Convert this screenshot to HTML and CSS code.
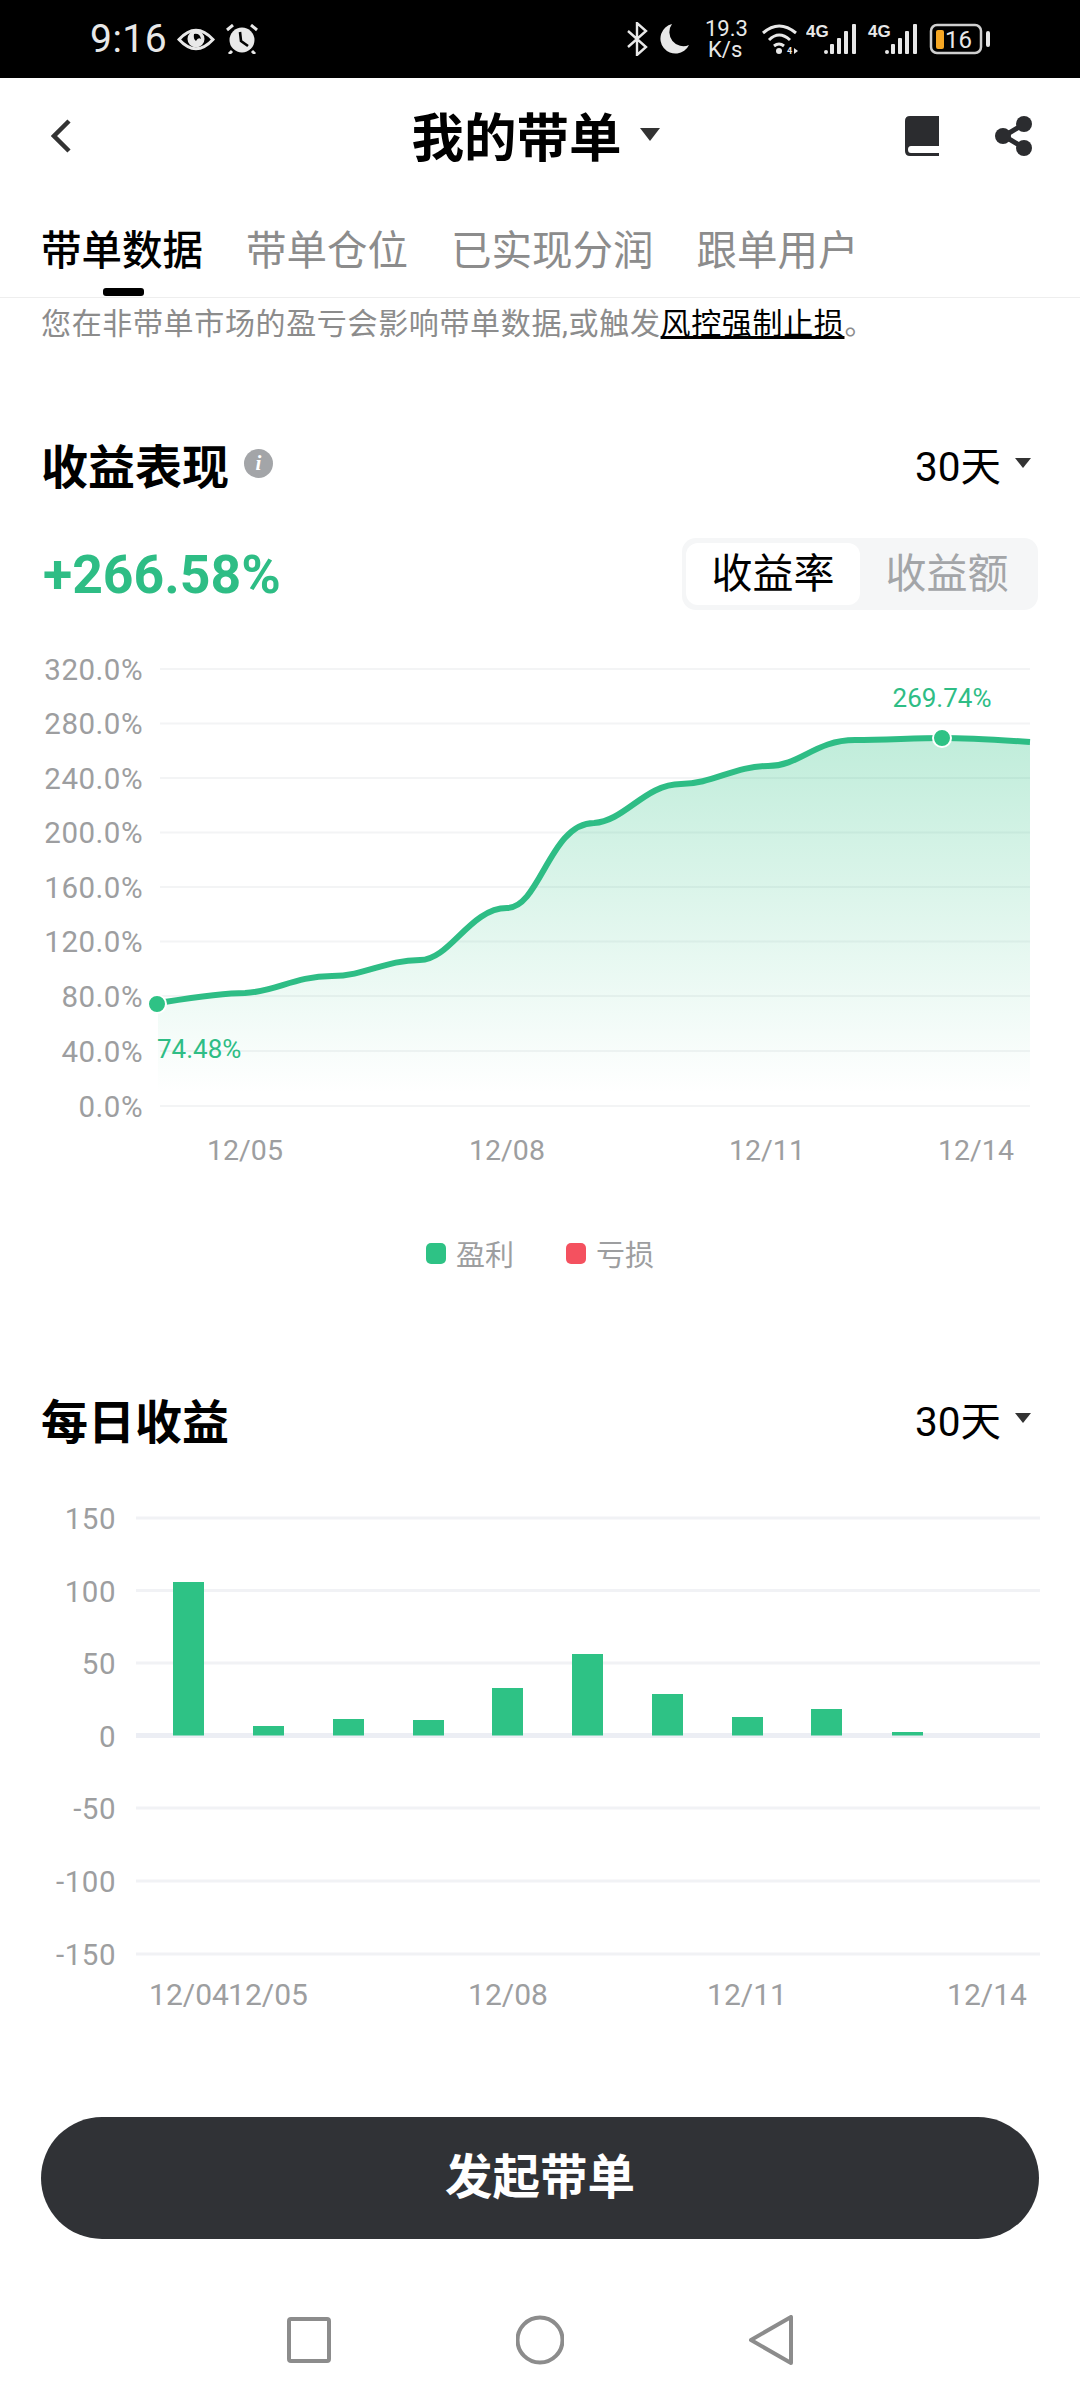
FILE: index.html
```html
<!DOCTYPE html>
<html lang="zh-CN">
<head>
	<meta charset="UTF-8">
	<title>我的带单</title>
	<link rel="stylesheet" href="styles.css">
</head>
<body>
	<div class="statusbar">
		<div class="status-left">
			<span class="clock">9:16</span>
			<svg class="ic-eye" width="38" height="25" viewBox="0 0 38 25">
				<path d="M2 12.5Q19 -6 36 12.5Q19 31 2 12.5Z" fill="none" stroke="#e8e8e8" stroke-width="3"/>
				<circle cx="19" cy="12" r="8.5" fill="#e8e8e8"/>
				<path d="M17 7Q23 6 24 12Q21 10 19 14Q16 12 17 7Z" fill="#000"/>
			</svg>
			<svg class="ic-alarm" width="32" height="30" viewBox="0 0 32 30">
				<circle cx="16" cy="16" r="12.5" fill="#e8e8e8"/>
				<path d="M1 6L7 1M31 6L25 1M6 27L3 30M26 27L29 30" stroke="#e8e8e8" stroke-width="3" fill="none"/>
				<path d="M14 8L15 17L22 22" stroke="#000" stroke-width="2.6" fill="none"/>
			</svg>
		</div>
		<div class="status-right">
			<svg width="25" height="34" viewBox="0 0 25 34">
				<path d="M1 9L19 25L10 33V1L19 9L1 25" fill="none" stroke="#e8e8e8" stroke-width="2.4"/>
			</svg>
			<svg width="37" height="34" viewBox="0 0 37 34">
				<path d="M12 2A15 15 0 1 0 29 23A14 14 0 0 1 12 2Z" fill="#e8e8e8"/>
			</svg>
			<div class="netspeed"><span>19.3</span><span>K/s</span></div>
			<svg width="36" height="34" viewBox="0 0 36 34">
				<path d="M1 11Q17 -3 34 11M7 18Q17 8 28 18M12 24Q17 20 22 24" fill="none" stroke="#e8e8e8" stroke-width="3"/>
				<circle cx="17" cy="29" r="3" fill="#e8e8e8"/>
				<text x="25" y="32" class="t-wifi">4</text>
				<path d="M32 26L36 29L32 32Z" fill="#e8e8e8"/>
			</svg>
			<svg width="51" height="34" viewBox="0 0 51 34">
				<text x="0" y="15" class="t-4g">4G</text>
				<g fill="#e8e8e8">
					<rect x="18" y="28" width="4" height="4" rx="2"/>
					<rect x="24" y="22" width="4" height="10" rx="1"/>
					<rect x="31" y="16" width="4" height="16" rx="1"/>
					<rect x="38" y="9" width="4" height="23" rx="1"/>
					<rect x="46" y="2" width="4" height="30" rx="1"/>
				</g>
			</svg>
			<svg width="53" height="34" viewBox="0 0 53 34">
				<text x="3" y="15" class="t-4g">4G</text>
				<g fill="#e8e8e8">
					<rect x="20" y="28" width="4" height="4" rx="2"/>
					<rect x="26" y="22" width="4" height="10" rx="1"/>
					<rect x="33" y="16" width="4" height="16" rx="1"/>
					<rect x="40" y="9" width="4" height="23" rx="1"/>
					<rect x="48" y="2" width="4" height="30" rx="1"/>
				</g>
			</svg>
			<svg width="64" height="34" viewBox="0 0 64 34">
				<rect x="5" y="3" width="50" height="28" rx="6" fill="none" stroke="#cfcfcf" stroke-width="2.5"/>
				<rect x="10" y="8" width="8" height="19" rx="2" fill="#f5a623"/>
				<text x="19" y="26" class="t-batt">16</text>
				<rect x="60" y="9" width="4" height="16" rx="2" fill="#e8e8e8"/>
			</svg>
		</div>
	</div>

	<div class="topnav">
		<svg class="back" width="20" height="34" viewBox="0 0 20 34">
			<path d="M18 2L3 17L18 32" fill="none" stroke="#333" stroke-width="4.5"/>
		</svg>
		<div class="title"><span>我的带单</span><i class="caret caret-lg"></i></div>
		<div class="nav-icons">
			<svg width="34" height="40" viewBox="0 0 34 40">
				<path d="M5 0H34V40H5Q0 40 0 35V5Q0 0 5 0Z" fill="#2b2c2f"/>
				<path d="M6 30H34V37H6Q3 37 3 33.5Q3 30 6 30Z" fill="#fff"/>
			</svg>
			<svg width="38" height="40" viewBox="0 0 38 40">
				<path d="M29 8L9 20L29 32" fill="none" stroke="#2b2c2f" stroke-width="5"/>
				<circle cx="29" cy="8" r="8" fill="#2b2c2f"/>
				<circle cx="8" cy="20" r="8" fill="#2b2c2f"/>
				<circle cx="29" cy="32" r="8" fill="#2b2c2f"/>
			</svg>
		</div>
	</div>

	<div class="tabs">
		<div class="tab active">带单数据</div>
		<div class="tab">带单仓位</div>
		<div class="tab">已实现分润</div>
		<div class="tab">跟单用户</div>
	</div>

	<p class="notice">您在非带单市场的盈亏会影响带单数据,或触发<u>风控强制止损</u>。</p>

	<div class="sec-head first">
		<div class="sec-title">收益表现<span class="info">i</span></div>
		<div class="range">30天<i class="caret"></i></div>
	</div>

	<div class="metric-row">
		<div class="metric">+266.58%</div>
		<div class="toggle">
			<div class="opt on">收益率</div>
			<div class="opt">收益额</div>
		</div>
	</div>

	<svg class="chart chart-rate" width="1080" height="580" viewBox="0 640 1080 580">
		<defs>
			<linearGradient id="areaFill" x1="0" y1="0" x2="0" y2="1">
				<stop offset="0" stop-color="#2ec285" stop-opacity=".3"/>
				<stop offset="1" stop-color="#2ec285" stop-opacity="0"/>
			</linearGradient>
		</defs>
		<g class="grid">
			<path d="M160 668H1030M160 722.5H1030M160 777H1030M160 831.5H1030M160 886H1030M160 940.5H1030M160 995H1030M160 1050H1030M160 1105H1030"/>
		</g>
		<g class="ylabel">
			<text x="143" y="678.5">320.0%</text>
			<text x="143" y="733">280.0%</text>
			<text x="143" y="787.5">240.0%</text>
			<text x="143" y="842">200.0%</text>
			<text x="143" y="896.5">160.0%</text>
			<text x="143" y="951">120.0%</text>
			<text x="143" y="1005.5">80.0%</text>
			<text x="143" y="1060.5">40.0%</text>
			<text x="143" y="1115.5">0.0%</text>
		</g>
		<path fill="url(#areaFill)" d="M158 1002C190 997 220 992 245 992C275 991 295 975 332 975C365 975 385 959 420 959C450 959 470 907 507 907C540 907 550 822 594 822C625 820 645 783 681 783C712 783 735 765 768 765C800 765 815 739 855 739C885 739 915 737 942 737C970 737 1000 739 1030 741V1092H158Z"/>
		<path class="line" d="M158 1002C190 997 220 992 245 992C275 991 295 975 332 975C365 975 385 959 420 959C450 959 470 907 507 907C540 907 550 822 594 822C625 820 645 783 681 783C712 783 735 765 768 765C800 765 815 739 855 739C885 739 915 737 942 737C970 737 1000 739 1030 741"/>
		<circle class="dot" cx="157" cy="1003" r="9"/>
		<circle class="dot" cx="942" cy="737" r="9"/>
		<text class="peak" x="942" y="706">269.74%</text>
		<text class="peak start" x="157" y="1057">74.48%</text>
		<g class="xlabel">
			<text x="245" y="1159">12/05</text>
			<text x="507" y="1159">12/08</text>
			<text x="767" y="1159">12/11</text>
			<text x="976" y="1159">12/14</text>
		</g>
	</svg>

	<div class="legend">
		<div class="lg"><i class="swatch up"></i>盈利</div>
		<div class="lg"><i class="swatch down"></i>亏损</div>
	</div>

	<div class="sec-head second">
		<div class="sec-title">每日收益</div>
		<div class="range">30天<i class="caret"></i></div>
	</div>

	<svg class="chart chart-daily" width="1080" height="560" viewBox="0 1470 1080 560">
		<g class="grid grid-b">
			<path d="M136 1517H1040M136 1589.5H1040M136 1662H1040M136 1807H1040M136 1880H1040M136 1953H1040"/>
		</g>
		<path class="zero" d="M136 1734.5H1040"/>
		<g class="ylabel">
			<text x="116" y="1528">150</text>
			<text x="116" y="1600.5">100</text>
			<text x="116" y="1673">50</text>
			<text x="116" y="1745.5">0</text>
			<text x="116" y="1818">-50</text>
			<text x="116" y="1891">-100</text>
			<text x="116" y="1964">-150</text>
		</g>
		<g class="bars">
			<rect x="173" y="1581" width="31" height="153.5"/>
			<rect x="253" y="1725" width="31" height="9.5"/>
			<rect x="333" y="1718" width="31" height="16.5"/>
			<rect x="413" y="1719" width="31" height="15.5"/>
			<rect x="492" y="1687" width="31" height="47.5"/>
			<rect x="572" y="1653" width="31" height="81.5"/>
			<rect x="652" y="1693" width="31" height="41.5"/>
			<rect x="732" y="1716" width="31" height="18.5"/>
			<rect x="811" y="1708" width="31" height="26.5"/>
			<rect x="892" y="1731" width="31" height="3.5"/>
		</g>
		<g class="xlabel wide">
			<text x="189" y="2004">12/04</text>
			<text x="268" y="2004">12/05</text>
			<text x="508" y="2004">12/08</text>
			<text x="747" y="2004">12/11</text>
			<text x="987" y="2004">12/14</text>
		</g>
	</svg>

	<div class="cta">发起带单</div>

	<div class="softkeys">
		<svg width="44" height="50" viewBox="0 0 44 50">
			<rect x="2" y="4" width="40" height="42" rx="2" fill="none" stroke="#8c8c8c" stroke-width="4"/>
		</svg>
		<svg width="48" height="50" viewBox="0 0 48 50">
			<circle cx="24" cy="25" r="22.5" fill="none" stroke="#8c8c8c" stroke-width="4"/>
		</svg>
		<svg width="44" height="50" viewBox="0 0 44 50">
			<path d="M42 2V48L2 25Z" fill="none" stroke="#8c8c8c" stroke-width="4" stroke-linejoin="round"/>
		</svg>
	</div>
</body>
</html>
```

FILE: styles.css
```css
* {
	box-sizing: border-box;
}

body {
	margin: 0;
	width: 1080px;
	height: 2400px;
	overflow: hidden;
	background: #fff;
	color: #000;
	font-family: Roboto, "Noto Sans CJK SC", sans-serif;
}

svg {
	display: block;
	flex: none;
}

/* status bar */
.statusbar {
	height: 78px;
	background: #000;
	display: flex;
	justify-content: space-between;
	align-items: center;
	padding: 0 90px;
	color: #e8e8e8;
}

.status-left {
	display: flex;
	align-items: center;
	gap: 11px;
}

.clock {
	width: 76px;
	font-size: 39px;
	letter-spacing: .5px;
}

.status-right {
	display: flex;
	align-items: center;
	gap: 8px;
}

.netspeed {
	width: 49px;
	display: flex;
	flex-direction: column;
	font-size: 22px;
	line-height: 21px;
	text-align: left;
}

.netspeed span:last-child {
	padding-left: 3px;
}

.t-wifi {
	font: 700 9px Roboto, sans-serif;
	fill: #e8e8e8;
}

.t-4g {
	font: 700 17px "Liberation Sans", sans-serif;
	fill: #e8e8e8;
}

.t-batt {
	font: 400 24px Roboto, sans-serif;
	fill: #e8e8e8;
}

/* top nav */
.topnav {
	height: 116px;
	display: grid;
	grid-template-columns: 1fr auto 1fr;
	align-items: center;
	padding: 0 47px 0 38px;
}

.back {
	margin-left: 13px;
}

.title {
	display: flex;
	align-items: center;
	gap: 18px;
	padding-top: 6px;
	font-size: 52.5px;
	font-weight: 700;
	line-height: 60px;
}

.nav-icons {
	display: flex;
	justify-content: flex-end;
	gap: 56px;
}

.caret {
	display: inline-block;
	width: 0;
	height: 0;
	border-left: 8px solid transparent;
	border-right: 8px solid transparent;
	border-top: 10px solid #333;
}

.caret-lg {
	border-left-width: 10px;
	border-right-width: 10px;
	border-top-width: 13px;
	margin-top: -10px;
}

/* tabs */
.tabs {
	height: 104px;
	display: flex;
	gap: 43px;
	padding: 35px 0 0 41px;
	border-bottom: 1px solid #eee;
	position: relative;
}

.tab {
	font-size: 40.5px;
	line-height: 44px;
	color: #8c8c8c;
}

.tab.active {
	color: #000;
	font-weight: 500;
	position: relative;
}

.tab.active::after {
	content: "";
	position: absolute;
	left: 62px;
	top: 59px;
	width: 41px;
	height: 8px;
	border-radius: 3px;
	background: #000;
}

.notice {
	margin: 6px 0 0;
	padding-left: 41px;
	font-size: 30px;
	line-height: 40px;
	letter-spacing: .65px;
	color: #8c8c8c;
}

.notice u {
	color: #000;
}

/* section heads */
.sec-head {
	display: flex;
	justify-content: space-between;
	align-items: center;
	height: 60px;
	padding: 0 49px 0 41px;
}

.sec-head.first {
	margin-top: 89px;
}

.sec-head.second {
	margin-top: 115px;
}

.sec-title {
	display: flex;
	align-items: center;
	gap: 15px;
	font-size: 47px;
	font-weight: 700;
}

.info {
	width: 29px;
	height: 29px;
	border-radius: 50%;
	background: #a3a5a8;
	color: #fff;
	font: italic 700 21px/29px "Liberation Serif", serif;
	text-align: center;
}

.range {
	display: flex;
	align-items: center;
	gap: 14px;
	font-size: 40.5px;
}

/* metric */
.metric-row {
	display: flex;
	justify-content: space-between;
	align-items: center;
	margin-top: 45px;
	padding: 0 42px 0 43px;
}

.metric {
	font-size: 53.5px;
	font-weight: 700;
	color: #2ebd85;
}

.toggle {
	width: 356px;
	height: 72px;
	padding: 5px 4px;
	display: flex;
	background: #f5f6f7;
	border-radius: 14px;
}

.opt {
	flex: 1;
	font-size: 41px;
	line-height: 62px;
	text-align: center;
	color: #a3a5a8;
}

.opt.on {
	flex: 0 0 174px;
	background: #fff;
	border-radius: 12px;
	color: #000;
}

/* charts */
.chart {
	margin-top: 31px;
}

.chart-daily {
	margin-top: 23px;
}

.grid path {
	fill: none;
	stroke: #f3f4f5;
	stroke-width: 2;
}

.grid-b path {
	stroke: #f1f2f5;
	stroke-width: 3;
}

.zero {
	stroke: #eceef4;
	stroke-width: 5;
}

.ylabel text {
	font-size: 29.5px;
	letter-spacing: .5px;
	fill: #9d9ea0;
	text-anchor: end;
}

.xlabel text {
	font-size: 28.5px;
	fill: #9d9ea0;
	text-anchor: middle;
}

.xlabel.wide text {
	font-size: 30px;
}

.line {
	fill: none;
	stroke: #2ebd85;
	stroke-width: 6;
}

.dot {
	fill: #2ec285;
	stroke: #fff;
	stroke-width: 2;
}

.peak {
	font-size: 26px;
	fill: #2ebd85;
	text-anchor: middle;
}

.peak.start {
	text-anchor: start;
}

.bars rect {
	fill: #2ec285;
}

/* legend */
.legend {
	display: flex;
	justify-content: center;
	gap: 52px;
	margin-top: 12px;
	height: 40px;
}

.lg {
	display: flex;
	align-items: center;
	gap: 10px;
	font-size: 29px;
	color: #9d9ea0;
}

.swatch {
	width: 20px;
	height: 21px;
	border-radius: 5px;
}

.swatch.up {
	background: #2ec285;
}

.swatch.down {
	background: #f4515f;
}

/* button */
.cta {
	margin: 86px 41px 0;
	height: 122px;
	border-radius: 61px;
	background: #303236;
	color: #fff;
	font-size: 47.5px;
	font-weight: 700;
	line-height: 122px;
	text-align: center;
}

.softkeys {
	display: flex;
	gap: 185px;
	margin-top: 76px;
	padding-left: 287px;
}
```
